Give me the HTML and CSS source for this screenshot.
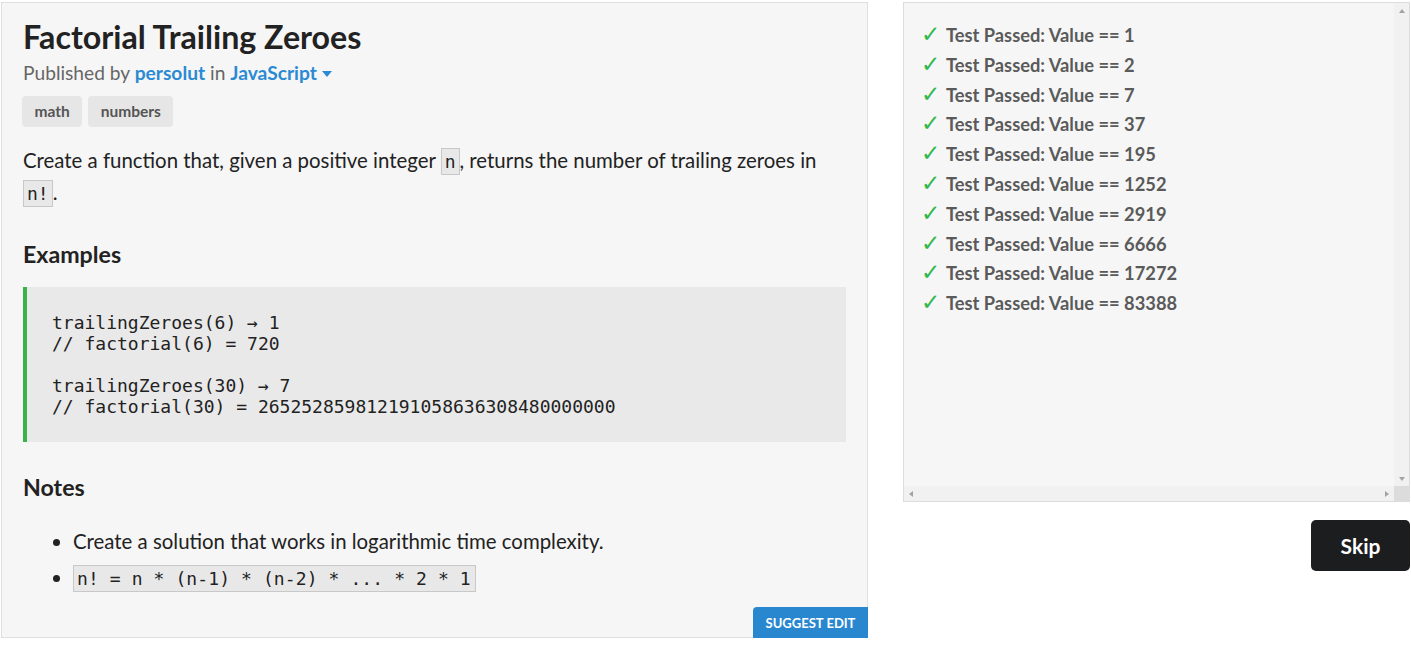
FILE: index.html
```html
<!DOCTYPE html>
<html lang="en">
<head>
<meta charset="utf-8">
<title>Factorial Trailing Zeroes</title>
<link rel="stylesheet" href="styles.css">
</head>
<body>
<div class="page">
  <section class="challenge">
    <h1 class="title">Factorial Trailing Zeroes</h1>
    <div class="meta">Published by <a class="link" href="#">persolut</a> in <a class="link" href="#">JavaScript</a><span class="caret"></span></div>
    <div class="tags">
      <span class="tag">math</span>
      <span class="tag">numbers</span>
    </div>
    <p class="desc">Create a function that, given a positive integer <code class="ic">n</code>, returns the number of trailing zeroes in <code class="ic">n!</code>.</p>
    <h2 class="heading">Examples</h2>
    <pre class="example">trailingZeroes(6) → 1
// factorial(6) = 720

trailingZeroes(30) → 7
// factorial(30) = 265252859812191058636308480000000</pre>
    <h2 class="heading notes-heading">Notes</h2>
    <ul class="notes">
      <li>Create a solution that works in logarithmic time complexity.</li>
      <li><code class="ic">n! = n * (n-1) * (n-2) * ... * 2 * 1</code></li>
    </ul>
    <a class="suggest" href="#">SUGGEST EDIT</a>
  </section>
  <aside class="side">
    <div class="results">
      <ul class="tests">
        <li><span class="check">✓</span>Test Passed: Value == 1</li>
        <li><span class="check">✓</span>Test Passed: Value == 2</li>
        <li><span class="check">✓</span>Test Passed: Value == 7</li>
        <li><span class="check">✓</span>Test Passed: Value == 37</li>
        <li><span class="check">✓</span>Test Passed: Value == 195</li>
        <li><span class="check">✓</span>Test Passed: Value == 1252</li>
        <li><span class="check">✓</span>Test Passed: Value == 2919</li>
        <li><span class="check">✓</span>Test Passed: Value == 6666</li>
        <li><span class="check">✓</span>Test Passed: Value == 17272</li>
        <li><span class="check">✓</span>Test Passed: Value == 83388</li>
      </ul>
      <div class="vbar"><span class="arr arr-up"></span><span class="arr arr-down"></span></div>
      <div class="hbar"><span class="arr arr-left"></span><span class="arr arr-right"></span></div>
      <div class="corner"></div>
    </div>
    <button class="skip" type="button">Skip</button>
  </aside>
</div>
</body>
</html>
```
FILE: styles.css
```css
* { box-sizing: border-box; }
html, body { margin: 0; padding: 0; background: #fff; }
body { font-family: Lato, "Open Sans", sans-serif; color: #333; }

.page {
  display: flex;
  align-items: flex-start;
  gap: 35px;
  padding: 2px 1px 0 1px;
}

.challenge {
  position: relative;
  width: 867px;
  height: 636px;
  flex: none;
  background: #f6f6f6;
  border: 1px solid #e0e0e0;
  padding: 15px 21px 0 21px;
}

.title {
  margin: 0;
  font-size: 32.2px;
  line-height: 37px;
  font-weight: 700;
  color: #222;
}

.meta {
  margin-top: 7px;
  font-size: 19.2px;
  line-height: 22px;
  color: #666;
}
.link { color: #2a8ad4; font-weight: 700; text-decoration: none; }
.caret {
  display: inline-block;
  margin-left: 5px;
  vertical-align: 3px;
  border-left: 5.5px solid transparent;
  border-right: 5.5px solid transparent;
  border-top: 6px solid #2a8ad4;
}

.tags { display: flex; gap: 6px; margin-top: 12px; margin-left: -1px; }
.tag {
  display: inline-block;
  background: #e6e6e6;
  border-radius: 4px;
  padding: 7px 12.5px;
  font-size: 15.5px;
  line-height: 17px;
  font-weight: 700;
  color: #555;
}

.desc {
  margin: 17px 0 0 0;
  font-size: 20.4px;
  line-height: 32px;
  color: #222;
}

.ic {
  font-family: "DejaVu Sans Mono", monospace;
  font-size: 18px;
  line-height: 1;
  background: #e8e8e8;
  border: 1px solid #c8c8c8;
  padding: 2px 3px;
  color: #222;
}

.heading {
  margin: 33px 0 0 0;
  font-size: 23.2px;
  line-height: 26px;
  font-weight: 700;
  color: #222;
}

.example {
  margin: 20px 0 0 0;
  background: #e9e9e9;
  border-left: 4px solid #36b44a;
  padding: 25px 25px 25px 25px;
  font-family: "DejaVu Sans Mono", monospace;
  font-size: 18px;
  line-height: 21px;
  color: #222;
}

.notes-heading { margin-top: 32px; }

.notes {
  margin: 25px 0 0 0;
  padding-left: 50px;
  font-size: 20.4px;
  line-height: 32px;
  color: #222;
}
.notes li { margin-bottom: 4px; }
.notes .ic { padding: 2px 4px 2px 3px; letter-spacing: 0.1px; }

.suggest {
  position: absolute;
  right: -1px;
  bottom: -1px;
  width: 115px;
  height: 31px;
  display: flex;
  align-items: center;
  justify-content: center;
  background: #2987d0;
  color: #fff;
  font-size: 13px;
  font-weight: 700;
  text-decoration: none;
  border-top-left-radius: 4px;
}

.side {
  width: 507px;
  flex: none;
  display: flex;
  flex-direction: column;
  align-items: flex-end;
}

.results {
  width: 507px;
  height: 500px;
  border: 1px solid #dcdcdc;
  background: #f6f6f6;
  overflow: hidden;
  display: grid;
  grid-template-columns: 1fr 15px;
  grid-template-rows: 1fr 15px;
}

.tests {
  list-style: none;
  margin: 0;
  padding: 18px 0 0 18px;
  font-size: 18.3px;
  line-height: 29.8px;
  font-weight: 700;
  color: #5a5a5a;
  overflow: hidden;
}
.check {
  display: inline-block;
  width: 24px;
  margin-left: -1px;
  margin-right: 1px;
  font-family: "DejaVu Sans", sans-serif;
  font-size: 23px;
  line-height: 1;
  font-weight: 700;
  color: #2fb84c;
}

.vbar {
  background: #f1f1f1;
  display: flex;
  flex-direction: column;
  justify-content: space-between;
  align-items: center;
  padding: 6px 0 5px 0;
}
.hbar {
  background: #f1f1f1;
  display: flex;
  justify-content: space-between;
  align-items: center;
  padding: 0 5px 0 5px;
}
.corner { background: #dcdcdc; }

.arr { display: block; width: 0; height: 0; }
.arr-up {
  border-left: 3.5px solid transparent;
  border-right: 3.5px solid transparent;
  border-bottom: 4px solid #a3a3a3;
}
.arr-down {
  border-left: 3.5px solid transparent;
  border-right: 3.5px solid transparent;
  border-top: 4px solid #a3a3a3;
}
.arr-left {
  border-top: 3.5px solid transparent;
  border-bottom: 3.5px solid transparent;
  border-right: 4px solid #a3a3a3;
}
.arr-right {
  border-top: 3.5px solid transparent;
  border-bottom: 3.5px solid transparent;
  border-left: 4px solid #a3a3a3;
}

.skip {
  margin-top: 18px;
  width: 99px;
  height: 51px;
  border: none;
  border-radius: 5px;
  background: #1c1d1f;
  color: #fff;
  font-family: Lato, sans-serif;
  font-size: 21px;
  font-weight: 700;
  cursor: pointer;
}
```
